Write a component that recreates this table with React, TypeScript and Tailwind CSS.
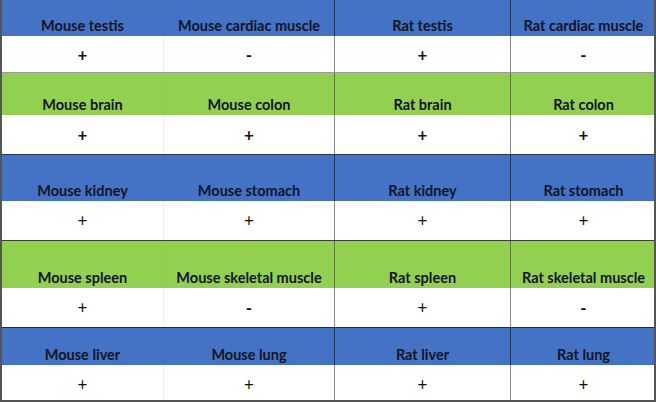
const BLUE = 'bg-[#4472c4]';
const GREEN = 'bg-[#92d050]';

type Cell = { label: string; value: string; bold: boolean };

const GROUPS: { green: boolean; h: string; d: string; line: string; cells: Cell[] }[] = [
  {
    green: false,
    h: 'h-[36px]',
    d: 'h-[36px]',
    line: 'border-t-0',
    cells: [
      { label: 'Mouse testis', value: '+', bold: true },
      { label: 'Mouse cardiac muscle', value: '-', bold: true },
      { label: 'Rat testis', value: '+', bold: true },
      { label: 'Rat cardiac muscle', value: '-', bold: true },
    ],
  },
  {
    green: true,
    h: 'h-[42px]',
    d: 'h-[39px]',
    line: 'border-t border-[#9a9a9a]',
    cells: [
      { label: 'Mouse brain', value: '+', bold: true },
      { label: 'Mouse colon', value: '+', bold: true },
      { label: 'Rat brain', value: '+', bold: true },
      { label: 'Rat colon', value: '+', bold: true },
    ],
  },
  {
    green: false,
    h: 'h-[46px]',
    d: 'h-[39px]',
    line: 'border-t border-[#2a3550]',
    cells: [
      { label: 'Mouse kidney', value: '+', bold: false },
      { label: 'Mouse stomach', value: '+', bold: false },
      { label: 'Rat kidney', value: '+', bold: false },
      { label: 'Rat stomach', value: '+', bold: false },
    ],
  },
  {
    green: true,
    h: 'h-[47px]',
    d: 'h-[39px]',
    line: 'border-t border-[#3a3f35]',
    cells: [
      { label: 'Mouse spleen', value: '+', bold: false },
      { label: 'Mouse skeletal muscle', value: '-', bold: true },
      { label: 'Rat spleen', value: '+', bold: false },
      { label: 'Rat skeletal muscle', value: '-', bold: true },
    ],
  },
  {
    green: false,
    h: 'h-[37px]',
    d: 'h-[38px]',
    line: 'border-t border-[#1f2a44]',
    cells: [
      { label: 'Mouse liver', value: '+', bold: false },
      { label: 'Mouse lung', value: '+', bold: false },
      { label: 'Rat liver', value: '+', bold: false },
      { label: 'Rat lung', value: '+', bold: false },
    ],
  },
];

// column widths and the divider on each column's left edge (blue header / green header / data)
const COLS = [
  { w: 'w-[161px]', bd: '', gd: '', dd: '' },
  { w: 'w-[171px]', bd: 'border-l border-[#4170c0]', gd: 'border-l border-[#8fcc4e]', dd: 'border-l border-[#f0f0f0]' },
  { w: 'w-[176px]', bd: 'border-l border-[#24365e]', gd: 'border-l border-[#5d7a3a]', dd: 'border-l border-[#8a8a8a]' },
  { w: 'w-[146px]', bd: 'border-l border-[#24365e]', gd: 'border-l border-[#5d7a3a]', dd: 'border-l border-[#8a8a8a]' },
];

export default function App() {
  return (
    <div
      className="w-[656px] h-[402px] bg-white overflow-hidden border-l-2 border-r-2 border-b-2 border-[#555] text-[#111]"
      style={{ fontFamily: 'Lato, "Liberation Sans", sans-serif' }}
    >
      {GROUPS.map((g, gi) => (
        <div key={gi} className={g.line}>
          <div className={`flex ${g.green ? GREEN : BLUE} ${g.h}`}>
            {g.cells.map((c, ci) => (
              <div
                key={c.label}
                className={`${COLS[ci].w} ${g.green ? COLS[ci].gd : COLS[ci].bd} shrink-0 flex items-end justify-center pb-[3px] text-[14.5px] font-bold leading-none whitespace-nowrap text-[#141428]`}
              >
                {c.label}
              </div>
            ))}
          </div>
          <div className={`flex ${g.d}`}>
            {g.cells.map((c, ci) => (
              <div
                key={c.label}
                className={`${COLS[ci].w} ${COLS[ci].dd} shrink-0 flex items-center justify-center text-[17px] leading-none ${c.bold ? 'font-bold' : 'font-normal'}`}
              >
                {c.value}
              </div>
            ))}
          </div>
        </div>
      ))}
    </div>
  );
}
